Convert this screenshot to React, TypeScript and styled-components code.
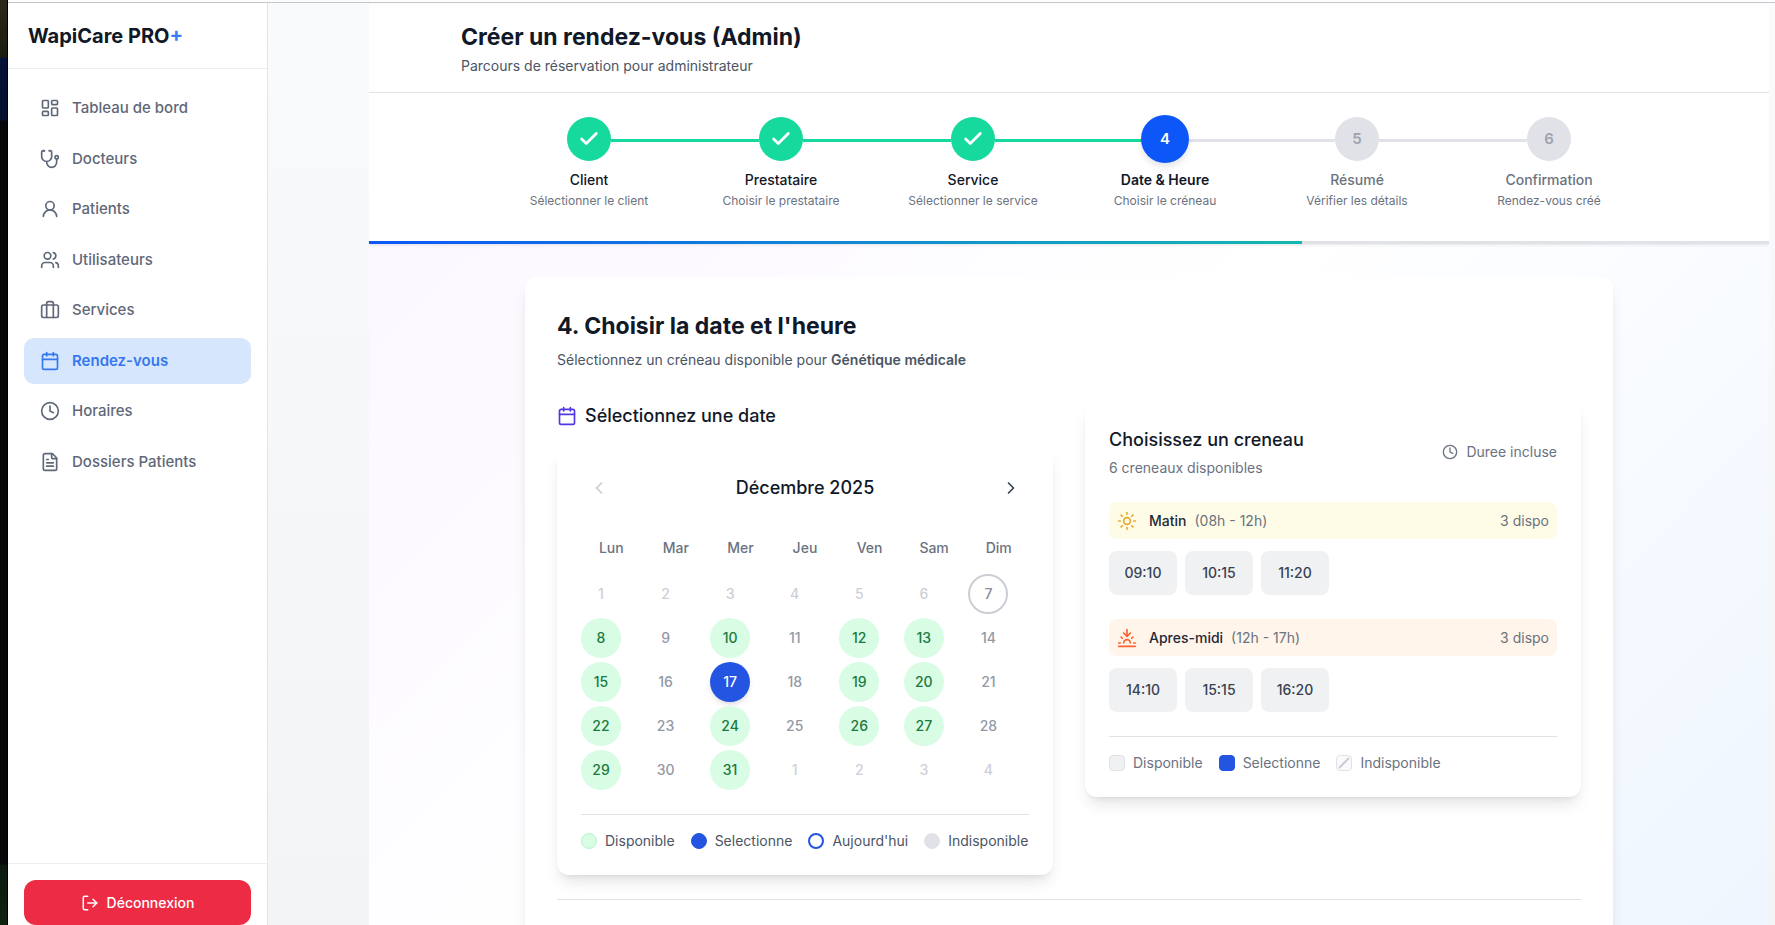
import React from "react";
import styled, { createGlobalStyle, css } from "styled-components";
import {
  Calendar, Check, ChevronLeft, ChevronRight, Clock, FileText,
  LayoutDashboard, LogOut, Sun, Sunset, UserRound, Users,
} from "lucide-react";

const GlobalStyle = createGlobalStyle`
  *, *::before, *::after { box-sizing: border-box; }
  body {
    margin: 0;
    font-family: Inter, "Liberation Sans", sans-serif;
    font-size: 14px;
    line-height: 20px;
    color: #111827;
    -webkit-font-smoothing: antialiased;
  }
  h1, h2, h3, h4, p, ul, ol { margin: 0; padding: 0; }
  ul, ol { list-style: none; }
  button { font: inherit; border: 0; cursor: pointer; }
`;

const Desktop = styled.div`
  height: 100vh;
  display: flex;
  padding-left: 8px;
  background:
    linear-gradient(90deg, transparent 7px, #000 7px),
    linear-gradient(#2b2a1a 0, #1c1c10 57px, #051238 58px, #04102e 120px, #060708 121px, #060708 864px, #0b1a10 866px, #10230f 100%);
`;

const Window = styled.div`
  flex: 1;
  min-width: 0;
  display: flex;
  flex-direction: column;
  border-top: 2px solid #fdfdfd;
  background: #f3f4f6;
`;

const WindowEdge = styled.div`
  height: 1px;
  flex: none;
  background: #c3c6ca;
`;

const Shell = styled.div`
  flex: 1;
  min-height: 0;
  display: flex;
  background: linear-gradient(#f8fafc, #f3f4f6);
`;

const Sidebar = styled.aside`
  width: 260px;
  flex: none;
  display: flex;
  flex-direction: column;
  background: #fff;
  border-right: 1px solid #e2e5ea;
`;

const Brand = styled.div`
  padding: 19px 20px 18px;
  border-bottom: 1px solid #eceef2;
  font-size: 20px;
  line-height: 28px;
  font-weight: 700;
  span { color: #3b7cf6; }
`;

const Nav = styled.nav`
  flex: 1;
  padding: 16px;
  ul { display: flex; flex-direction: column; gap: 4px; }
`;

const NavLink = styled.a<{ $active?: boolean }>`
  display: flex;
  align-items: center;
  gap: 12px;
  padding: 12px 16px;
  border-radius: 10px;
  font-size: 15px;
  line-height: 1.5;
  font-weight: 500;
  text-decoration: none;
  color: #5f6878;
  svg { width: 20px; height: 20px; }
  ${(p) => p.$active && css`
    background: #d6e6fc;
    color: #3577ef;
    font-weight: 600;
  `}
`;

const SidebarFooter = styled.div`
  padding: 16px 16px 0;
  border-top: 1px solid #eceef2;
`;

const LogoutButton = styled.button`
  width: 100%;
  height: 45px;
  display: flex;
  align-items: center;
  justify-content: center;
  gap: 8px;
  border-radius: 12px;
  background: #ed2b45;
  color: #fff;
  font-weight: 500;
`;

const Page = styled.main`
  flex: 1;
  min-width: 0;
  margin: 1px 6px 0 101px;
  overflow-y: auto;
  scrollbar-width: none;
  background: linear-gradient(135deg, #faf5ff, #ffffff 50%, #eff6ff);
`;

const TopPanel = styled.div`
  background: #fff;
  box-shadow: 0 1px 3px rgba(0, 0, 0, 0.1);
`;

const PageHeader = styled.header`
  border-bottom: 1px solid #dfe2e7;
`;

const HeaderInner = styled.div`
  max-width: 1280px;
  margin: 0 auto;
  padding: 17px 32px 16px;
  p { margin-top: 3px; color: #4b5563; }
`;

const Title = styled.h1`
  font-size: 23px;
  line-height: 32px;
  font-weight: 700;
`;

const Steps = styled.ol`
  max-width: 1152px;
  margin: 0 auto;
  padding: 24px 0 32px;
  display: grid;
  grid-template-columns: repeat(6, 1fr);
`;

type StepState = "done" | "current" | "todo";

const Step = styled.li<{ $state: StepState }>`
  display: flex;
  flex-direction: column;
  align-items: center;
  text-align: center;
  strong {
    margin-top: 9px;
    font-weight: ${(p) => (p.$state === "current" ? 600 : 500)};
    color: ${(p) => (p.$state === "todo" ? "#6b7280" : "#111827")};
  }
  small { margin-top: 3px; font-size: 12px; line-height: 16px; color: #6b7280; }
`;

const StepRail = styled.div`
  align-self: stretch;
  height: 44px;
  display: flex;
  align-items: center;
  justify-content: center;
`;

const RailLine = styled.span<{ $tone: "done" | "todo" | "none" }>`
  flex: 1;
  height: 3px;
  margin-top: 2px;
  background: ${(p) => ({ done: "#16d99d", todo: "#e1e2e8", none: "transparent" })[p.$tone]};
`;

const StepDot = styled.span<{ $state: StepState }>`
  width: 44px;
  height: 44px;
  flex: none;
  z-index: 1;
  display: flex;
  align-items: center;
  justify-content: center;
  border-radius: 50%;
  font-size: 15px;
  font-weight: 600;
  background: #e1e2e8;
  color: #9ca3af;
  ${(p) => p.$state === "done" && css`background: #16d99d; color: #fff;`}
  ${(p) => p.$state === "current" && css`
    width: 48px;
    height: 48px;
    margin: -2px;
    background: #0d57f8;
    color: #fff;
    box-shadow: 0 4px 6px rgba(0, 0, 0, 0.1);
  `}
`;

const ProgressTrack = styled.div`
  height: 3px;
  background: #e1e2e8;
`;

const ProgressFill = styled.div`
  height: 100%;
  background: linear-gradient(90deg, #0d57f8, #14b8b0);
`;

const Card = styled.section`
  max-width: 1088px;
  margin: 33px auto;
  padding: 33px 32px 64px;
  border-radius: 12px;
  background: #fff;
  box-shadow: 0 10px 15px -3px rgba(0, 0, 0, 0.1), 0 4px 6px -4px rgba(0, 0, 0, 0.1);
`;

const CardHead = styled.div`
  margin-bottom: 32px;
  h2 { font-size: 23px; line-height: 32px; font-weight: 700; }
  p { margin-top: 8px; color: #4b5563; }
  strong { font-weight: 600; }
`;

const Columns = styled.div`
  display: grid;
  grid-template-columns: repeat(2, minmax(0, 1fr));
  gap: 32px;
  align-items: start;
  padding-bottom: 24px;
  border-bottom: 1px solid #e1e2e8;
`;

const SubHeading = styled.h3`
  display: flex;
  align-items: center;
  gap: 8px;
  font-size: 18px;
  line-height: 28px;
  font-weight: 500;
  svg { color: #4f39e6; }
`;

const Panel = styled.div`
  padding: 24px;
  border-radius: 12px;
  background: #fff;
  box-shadow: 0 10px 15px -3px rgba(0, 0, 0, 0.1), 0 4px 6px -4px rgba(0, 0, 0, 0.1);
`;

const CalendarPanel = styled(Panel)`
  margin-top: 16px;
`;

const MonthBar = styled.div`
  display: flex;
  align-items: center;
  justify-content: space-between;
  margin-bottom: 24px;
`;

const MonthButton = styled.button`
  width: 36px;
  height: 36px;
  padding: 8px;
  background: none;
  color: #374151;
  &:disabled { color: #c9cdd4; }
  svg { display: block; }
`;

const CalendarTable = styled.table`
  width: calc(100% + 4px);
  border-collapse: collapse;
  table-layout: fixed;
  th { height: 36px; padding: 0 4px 0 0; font-weight: 500; color: #6b7280; }
  td { padding: 0 0 4px; }
  thead::after { content: ""; display: table-row; height: 8px; }
  tbody tr:last-child td { padding-bottom: 0; }
`;

type DayKind = "free" | "picked" | "today" | "closed" | "outside";

const DayButton = styled.button<{ $kind: DayKind }>`
  display: block;
  width: 40px;
  height: 40px;
  padding: 0;
  border-radius: 50%;
  background: none;
  font-weight: 500;
  color: #9299a6;
  ${(p) => p.$kind === "free" && css`background: #d8fce4; color: #1b7a40;`}
  ${(p) => p.$kind === "picked" && css`
    background: #2455e2;
    color: #fff;
    box-shadow: 0 4px 6px -1px rgba(0, 0, 0, 0.1), 0 2px 4px -2px rgba(0, 0, 0, 0.1);
  `}
  ${(p) => p.$kind === "today" && css`border: 2px solid #cbced5; color: #868e9b;`}
  ${(p) => p.$kind === "outside" && css`color: #cdd0d6;`}
`;

const Legend = styled.ul<{ $color: string }>`
  display: flex;
  flex-wrap: wrap;
  gap: 8px 16px;
  margin-top: 24px;
  padding-top: 16px;
  border-top: 1px solid #e1e2e8;
  color: ${(p) => p.$color};
  li { display: flex; align-items: center; gap: 8px; }
`;

const Swatch = styled.span<{ $fill: string; $border?: string; $round?: boolean; $thick?: boolean }>`
  width: 16px;
  height: 16px;
  border-radius: ${(p) => (p.$round ? "50%" : "4px")};
  background: ${(p) => p.$fill};
  border: ${(p) => (p.$thick ? 2 : 1)}px solid ${(p) => p.$border ?? p.$fill};
  svg { display: block; width: 14px; height: 14px; }
`;

const SlotHead = styled.div`
  display: flex;
  align-items: center;
  justify-content: space-between;
  margin-bottom: 24px;
  color: #6b7280;
  h3 { color: #111827; }
  p { margin-top: 4px; }
`;

const Duration = styled.span`
  display: flex;
  align-items: center;
  gap: 8px;
`;

const SlotGroup = styled.section`
  & + & { margin-top: 24px; }
`;

const SlotBar = styled.div<{ $bg: string; $icon: string }>`
  display: flex;
  align-items: center;
  gap: 8px;
  padding: 8px;
  border-radius: 8px;
  line-height: 21px;
  background: ${(p) => p.$bg};
  color: #6b7280;
  svg { color: ${(p) => p.$icon}; margin-right: 4px; }
  h4 { font-weight: 500; color: #1f2937; }
  span:last-child { margin-left: auto; }
`;

const Slots = styled.div`
  display: flex;
  flex-wrap: wrap;
  gap: 8px;
  margin-top: 12px;
`;

const SlotButton = styled.button`
  width: 68px;
  height: 44px;
  padding: 0;
  border-radius: 8px;
  background: #f0f1f3;
  color: #374151;
  font-weight: 500;
`;

function StethoscopeIcon() {
  return (
    <svg viewBox="0 0 24 24" fill="none" stroke="currentColor" strokeWidth="2" strokeLinecap="round" strokeLinejoin="round" aria-hidden="true">
      <path d="M4.8 2.3A.3.3 0 1 0 5 2H4a2 2 0 0 0-2 2v5a6 6 0 0 0 6 6 6 6 0 0 0 6-6V4a2 2 0 0 0-2-2h-1a.2.2 0 1 0 .3.3" />
      <path d="M8 15v1a6 6 0 0 0 6 6 6 6 0 0 0 6-6v-4" />
      <circle cx="20" cy="10" r="2" />
    </svg>
  );
}

function SuitcaseIcon() {
  return (
    <svg viewBox="0 0 24 24" fill="none" stroke="currentColor" strokeWidth="2" strokeLinecap="round" strokeLinejoin="round" aria-hidden="true">
      <rect x="2" y="6" width="20" height="15" rx="2" />
      <path d="M8 21V4a2 2 0 0 1 2-2h4a2 2 0 0 1 2 2v17" />
    </svg>
  );
}

const navItems = [
  { label: "Tableau de bord", Icon: LayoutDashboard },
  { label: "Docteurs", Icon: StethoscopeIcon },
  { label: "Patients", Icon: UserRound },
  { label: "Utilisateurs", Icon: Users },
  { label: "Services", Icon: SuitcaseIcon },
  { label: "Rendez-vous", Icon: Calendar, active: true },
  { label: "Horaires", Icon: Clock },
  { label: "Dossiers Patients", Icon: FileText },
];

const steps: { name: string; hint: string; state: StepState }[] = [
  { name: "Client", hint: "Sélectionner le client", state: "done" },
  { name: "Prestataire", hint: "Choisir le prestataire", state: "done" },
  { name: "Service", hint: "Sélectionner le service", state: "done" },
  { name: "Date & Heure", hint: "Choisir le créneau", state: "current" },
  { name: "Résumé", hint: "Vérifier les détails", state: "todo" },
  { name: "Confirmation", hint: "Rendez-vous créé", state: "todo" },
];

const currentStep = steps.findIndex((s) => s.state === "current");
const weekdays = ["Lun", "Mar", "Mer", "Jeu", "Ven", "Sam", "Dim"];
const freeDays = [8, 10, 12, 13, 15, 19, 20, 22, 24, 26, 27, 29, 31];

function dayAt(index: number): { day: number; kind: DayKind } {
  const n = index + 1;
  if (n > 31) return { day: n - 31, kind: "outside" };
  if (n < 7) return { day: n, kind: "outside" };
  if (n === 7) return { day: n, kind: "today" };
  if (n === 17) return { day: n, kind: "picked" };
  return { day: n, kind: freeDays.includes(n) ? "free" : "closed" };
}

const railTone = (linkIndex: number) =>
  linkIndex < 0 || linkIndex >= steps.length - 1 ? "none" : linkIndex < currentStep ? "done" : "todo";

const slotGroups = [
  { name: "Matin", range: "(08h - 12h)", Icon: Sun, bg: "#fefce6", icon: "#e9a92f", times: ["09:10", "10:15", "11:20"] },
  { name: "Apres-midi", range: "(12h - 17h)", Icon: Sunset, bg: "#fff5eb", icon: "#fb6331", times: ["14:10", "15:15", "16:20"] },
];

export default function App() {
  return (
    <Desktop>
      <GlobalStyle />
      <Window>
        <WindowEdge />
        <Shell>
          <Sidebar>
            <Brand>WapiCare PRO<span>+</span></Brand>
            <Nav>
              <ul>
                {navItems.map(({ label, Icon, active }) => (
                  <li key={label}>
                    <NavLink href="#" $active={active}><Icon />{label}</NavLink>
                  </li>
                ))}
              </ul>
            </Nav>
            <SidebarFooter>
              <LogoutButton type="button"><LogOut size={18} />Déconnexion</LogoutButton>
            </SidebarFooter>
          </Sidebar>

          <Page>
            <TopPanel>
              <PageHeader>
                <HeaderInner>
                  <Title>Créer un rendez-vous (Admin)</Title>
                  <p>Parcours de réservation pour administrateur</p>
                </HeaderInner>
              </PageHeader>
              <Steps>
                {steps.map((step, i) => (
                  <Step key={step.name} $state={step.state}>
                    <StepRail>
                      <RailLine $tone={railTone(i - 1)} />
                      <StepDot $state={step.state}>
                        {step.state === "done" ? <Check size={22} strokeWidth={3} /> : i + 1}
                      </StepDot>
                      <RailLine $tone={railTone(i)} />
                    </StepRail>
                    <strong>{step.name}</strong>
                    <small>{step.hint}</small>
                  </Step>
                ))}
              </Steps>
              <ProgressTrack>
                <ProgressFill style={{ width: `${((currentStep + 1) / steps.length) * 100}%` }} />
              </ProgressTrack>
            </TopPanel>

            <Card>
              <CardHead>
                <h2>4. Choisir la date et l'heure</h2>
                <p>Sélectionnez un créneau disponible pour <strong>Génétique médicale</strong></p>
              </CardHead>
              <Columns>
                <div>
                  <SubHeading><Calendar size={20} />Sélectionnez une date</SubHeading>
                  <CalendarPanel>
                    <MonthBar>
                      <MonthButton type="button" aria-label="Mois précédent" disabled><ChevronLeft size={20} /></MonthButton>
                      <SubHeading as="h4">Décembre 2025</SubHeading>
                      <MonthButton type="button" aria-label="Mois suivant"><ChevronRight size={20} /></MonthButton>
                    </MonthBar>
                    <CalendarTable>
                      <thead>
                        <tr>{weekdays.map((d) => <th key={d} scope="col">{d}</th>)}</tr>
                      </thead>
                      <tbody>
                        {[0, 1, 2, 3, 4].map((week) => (
                          <tr key={week}>
                            {weekdays.map((name, i) => {
                              const { day, kind } = dayAt(week * 7 + i);
                              return (
                                <td key={name}>
                                  <DayButton type="button" $kind={kind}>{day}</DayButton>
                                </td>
                              );
                            })}
                          </tr>
                        ))}
                      </tbody>
                    </CalendarTable>
                    <Legend $color="#4b5563">
                      <li><Swatch $round $fill="#d8fce4" $border="#b5f5cb" />Disponible</li>
                      <li><Swatch $round $fill="#2455e2" />Selectionne</li>
                      <li><Swatch $round $thick $fill="#fff" $border="#2455e2" />Aujourd'hui</li>
                      <li><Swatch $round $fill="#e1e2e8" />Indisponible</li>
                    </Legend>
                  </CalendarPanel>
                </div>

                <Panel>
                  <SlotHead>
                    <div>
                      <SubHeading>Choisissez un creneau</SubHeading>
                      <p>6 creneaux disponibles</p>
                    </div>
                    <Duration><Clock size={16} />Duree incluse</Duration>
                  </SlotHead>
                  {slotGroups.map(({ name, range, Icon, bg, icon, times }) => (
                    <SlotGroup key={name}>
                      <SlotBar $bg={bg} $icon={icon}>
                        <Icon size={20} />
                        <h4>{name}</h4>
                        <span>{range}</span>
                        <span>{times.length} dispo</span>
                      </SlotBar>
                      <Slots>
                        {times.map((t) => <SlotButton key={t} type="button">{t}</SlotButton>)}
                      </Slots>
                    </SlotGroup>
                  ))}
                  <Legend $color="#6b7280">
                    <li><Swatch $fill="#f0f1f3" $border="#e1e2e8" />Disponible</li>
                    <li><Swatch $fill="#2455e2" />Selectionne</li>
                    <li>
                      <Swatch $fill="#f9fafb" $border="#e1e2e8">
                        <svg viewBox="0 0 14 14" stroke="#c9ccd3" strokeWidth="2" aria-hidden="true"><path d="M2 12 12 2" /></svg>
                      </Swatch>
                      Indisponible
                    </li>
                  </Legend>
                </Panel>
              </Columns>
            </Card>
          </Page>
        </Shell>
      </Window>
    </Desktop>
  );
}
